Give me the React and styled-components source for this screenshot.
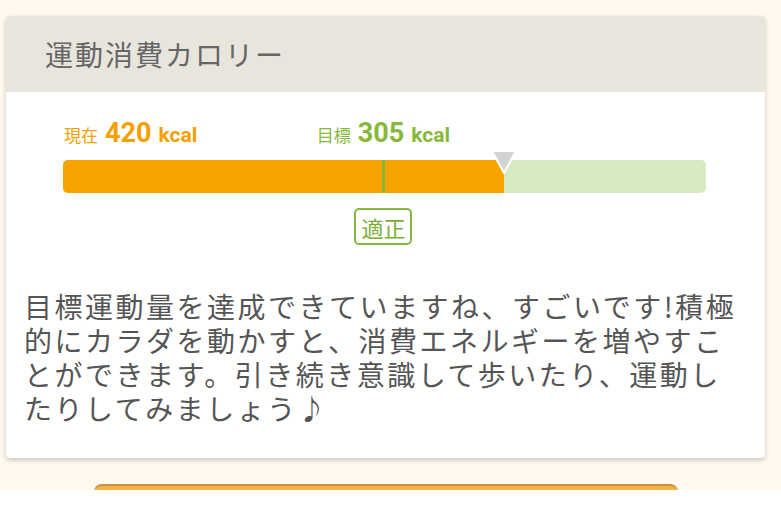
import React from "react";
import styled, { createGlobalStyle } from "styled-components";

const GlobalStyle = createGlobalStyle`
  body {
    margin: 0;
    background: #ffffff;
    font-family: "Noto Sans CJK JP", "Noto Sans", sans-serif;
  }
`;

const current = 420;
const goal = 305;
const max = 612;

const App = () => {
  const goalPct = (goal / max) * 100;
  const currentPct = (current / max) * 100;
  return (
    <>
      <GlobalStyle />
      <Page>
        <Card>
          <Header>
            <Title>運動消費カロリー</Title>
          </Header>
          <Body>
            <Gauge>
              <Labels>
                <Label $color="#f5a000">
                  <Caption>現在</Caption>
                  <Value>420</Value>
                  <Unit>kcal</Unit>
                </Label>
                <GoalLabel $color="#86b83c" style={{ left: `${goalPct}%` }}>
                  <Caption>目標</Caption>
                  <Value>305</Value>
                  <Unit>kcal</Unit>
                </GoalLabel>
              </Labels>
              <Track>
                <Bar>
                  <Fill style={{ width: `${currentPct}%` }} />
                  <GoalLine style={{ left: `${goalPct}%` }} />
                </Bar>
                <Pointer style={{ left: `${currentPct}%` }} viewBox="0 0 26 25">
                  <polygon points="1,1 25,1 13,23" fill="#d3d3d3" stroke="#fff" strokeWidth="2" strokeLinejoin="round" />
                </Pointer>
              </Track>
              <BadgeRow>
                <Badge style={{ left: `${goalPct}%` }}>適正</Badge>
              </BadgeRow>
            </Gauge>
            <Message>
              目標運動量を達成できていますね、すごいです!積極的にカラダを動かすと、消費エネルギーを増やすことができます。引き続き意識して歩いたり、運動したりしてみましょう♪
            </Message>
          </Body>
        </Card>
        <NextButton />
      </Page>
    </>
  );
};

export default App;

const Page = styled.div`
  height: 490px;
  overflow: hidden;
  background: #fff9ee;
  padding: 16px 16px 0 6px;
  box-sizing: border-box;
`;

const Card = styled.section`
  width: 759px;
  background: #fff;
  border-radius: 4px;
  overflow: hidden;
  box-shadow: 0 2px 5px rgba(0, 0, 0, 0.22);
`;

const Header = styled.div`
  height: 76px;
  background: #e8e5dd;
  display: flex;
  align-items: center;
  padding-left: 39px;
`;

const Title = styled.h2`
  margin: 0;
  font-size: 28px;
  font-weight: 400;
  letter-spacing: 2px;
  color: #666;
`;

const Body = styled.div`
  padding: 0 18px 33px;
`;

const Gauge = styled.div`
  margin: 0 41px 0 39px;
`;

const Labels = styled.div`
  position: relative;
  height: 30px;
  margin-top: 26px;
  line-height: 30px;
  display: flex;
  align-items: baseline;
`;

const Label = styled.div`
  display: flex;
  align-items: baseline;
  white-space: nowrap;
  color: ${(p) => p.$color};
  padding-left: 1px;
`;

const GoalLabel = styled(Label)`
  position: absolute;
  top: 0;
  transform: translateX(-50%);
  padding-left: 0;
`;

const Caption = styled.span`
  font-family: "Noto Sans CJK JP", sans-serif;
  font-size: 17px;
  margin-right: 7px;
`;

const Value = styled.span`
  font-family: Roboto, "Liberation Sans", sans-serif;
  font-weight: 700;
  font-size: 27px;
  margin-right: 7px;
`;

const Unit = styled.span`
  font-family: Roboto, "Liberation Sans", sans-serif;
  font-weight: 700;
  font-size: 21px;
`;

const Track = styled.div`
  position: relative;
  margin-top: 12px;
`;

const Bar = styled.div`
  position: relative;
  height: 33px;
  border-radius: 5px;
  background: #d6eac3;
  overflow: hidden;
`;

const Fill = styled.div`
  height: 100%;
  background: #f7a400;
`;

const GoalLine = styled.div`
  position: absolute;
  top: 0;
  bottom: 0;
  width: 3px;
  margin-left: -1px;
  background: #86b83c;
`;

const Pointer = styled.svg`
  position: absolute;
  top: -10px;
  width: 26px;
  height: 25px;
  margin-left: -13px;
`;

const BadgeRow = styled.div`
  position: relative;
  height: 37px;
  margin-top: 15px;
`;

const Badge = styled.div`
  position: absolute;
  top: 0;
  transform: translateX(-50%);
  width: 58px;
  height: 37px;
  box-sizing: border-box;
  border: 2px solid #86b83c;
  border-radius: 5px;
  display: flex;
  align-items: center;
  justify-content: center;
  font-size: 22px;
  color: #7aae36;
`;

const Message = styled.p`
  margin: 44px 0 0;
  font-size: 28px;
  line-height: 34px;
  letter-spacing: 2.5px;
  color: #555;
`;

const NextButton = styled.div`
  width: 584px;
  height: 44px;
  margin: 26px 0 0 88px;
  border-radius: 8px;
  background: #f7b13c;
  border-top: 2px solid #c98d4a;
  box-sizing: border-box;
`;
